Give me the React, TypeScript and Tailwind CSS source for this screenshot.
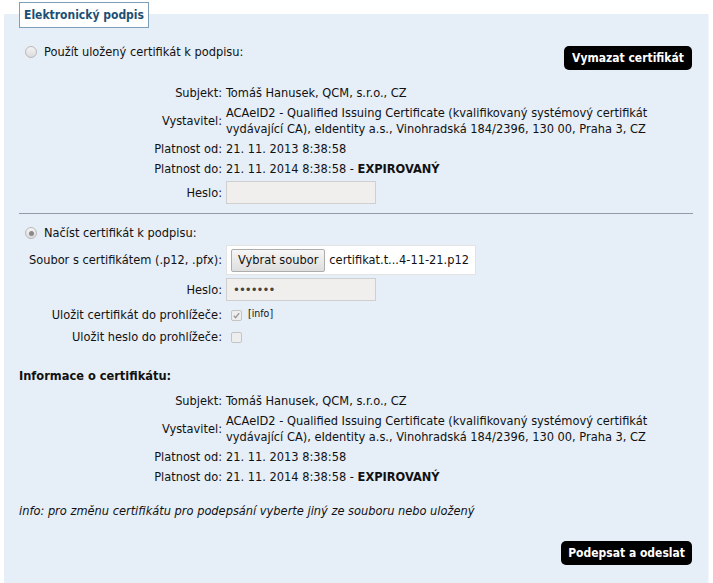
import React from 'react';

const FONT = "font-['DejaVu_Sans_Condensed','Liberation_Sans',sans-serif]";

function Row({ label, children, className = '' }: { label: string; children: React.ReactNode; className?: string }) {
  return (
    <div className={`flex items-center gap-1 ${className}`}>
      <div className="w-[203px] text-right whitespace-nowrap shrink-0">{label}</div>
      <div className="min-w-0">{children}</div>
    </div>
  );
}

function Radio({ checked = false }: { checked?: boolean }) {
  return (
    <span className="inline-flex w-[12px] h-[12px] rounded-full border border-[#b9b9b9] bg-gradient-to-b from-[#f4f4f4] to-[#dcdcdc] items-center justify-center shrink-0">
      {checked && <span className="w-[5px] h-[5px] rounded-full bg-[#8a8a8a]" />}
    </span>
  );
}

function Checkbox({ checked = false }: { checked?: boolean }) {
  return (
    <span className="inline-flex w-[11px] h-[11px] rounded-[2px] border border-[#c4c4c4] bg-[#eeeeee] items-center justify-center shrink-0">
      {checked && (
        <svg viewBox="0 0 10 10" className="w-[9px] h-[9px]">
          <path d="M2 5.2 L4 7.4 L8 2.4" fill="none" stroke="#9a9a9a" strokeWidth="1.6" />
        </svg>
      )}
    </span>
  );
}

function CertInfo() {
  return (
    <div className="flex flex-col gap-1">
      <Row label="Subjekt:">Tomáš Hanusek, QCM, s.r.o., CZ</Row>
      <Row label="Vystavitel:">
        <div>
          ACAeID2 - Qualified Issuing Certificate (kvalifikovaný systémový certifikát
          <br />
          vydávající CA), eIdentity a.s., Vinohradská 184/2396, 130 00, Praha 3, CZ
        </div>
      </Row>
      <Row label="Platnost od:">21. 11. 2013 8:38:58</Row>
      <Row label="Platnost do:">
        21. 11. 2014 8:38:58 - <b>EXPIROVANÝ</b>
      </Row>
    </div>
  );
}

export default function App() {
  return (
    <div className={`w-[713px] h-[583px] overflow-hidden bg-white relative ${FONT} text-[12.7px] leading-[16px] text-[#111]`}>
      <div className="mt-[14px] ml-[4px] w-[705px] h-[600px] bg-[#e6eef7] border-r border-[#f3f7fb] pl-[15px] pr-[16px]">
        {/* legend */}
        <div className="absolute left-[19px] top-[2px] h-[26px] px-[4px] border border-[#7d9fb8] bg-white flex items-center font-bold text-[12px] text-[#1d4f74]">
          Elektronický podpis
        </div>

        {/* saved certificate */}
        <div className="pt-[29px] flex justify-between items-start">
          <label className="flex items-center gap-[7px] pl-[6px] mt-[1px]">
            <Radio />
            <span>Použít uložený certifikát k podpisu:</span>
          </label>
          <button className="mt-[3px] h-[24px] px-[8px] rounded-[5px] bg-black text-white font-bold text-[12px]">
            Vymazat certifikát
          </button>
        </div>

        <div className="mt-[15px]">
          <CertInfo />
          <Row label="Heslo:" className="mt-1">
            <div className="w-[150px] h-[23px] border border-[#cfcfcf] bg-[#f0efed]" />
          </Row>
        </div>

        <div className="mt-[9px] h-px bg-[#8e9cab] mr-[-1px]" />

        {/* load certificate */}
        <label className="mt-[11px] flex items-center gap-[7px] pl-[6px]">
          <Radio checked />
          <span>Načíst certifikát k podpisu:</span>
        </label>

        <div className="mt-[4px] flex flex-col gap-[4px]">
          <Row label="Soubor s certifikátem (.p12, .pfx):">
            <div className="h-[30px] w-[250px] bg-white border border-[#e3e3e3] flex items-center pl-[4px] gap-[4px] whitespace-nowrap">
              <span className="h-[23px] px-[6px] border border-[#adadad] rounded-[2px] bg-gradient-to-b from-[#f6f6f6] to-[#dedede] flex items-center">
                Vybrat soubor
              </span>
              <span>certifikat.t...4-11-21.p12</span>
            </div>
          </Row>
          <Row label="Heslo:" className="-mt-px">
            <div className="w-[150px] h-[23px] border border-[#cfcfcf] bg-[#f0efed] flex items-center pl-[6px] text-[#444] tracking-[-1px] text-[13px]">
              •••••••
            </div>
          </Row>
          <Row label="Uložit certifikát do prohlížeče:" className="mt-[2px]">
            <div className="flex items-center pl-[5px] gap-[6px]">
              <Checkbox checked />
              <span className="text-[10.5px] leading-[10px] -mt-[4px]">[info]</span>
            </div>
          </Row>
          <Row label="Uložit heslo do prohlížeče:" className="mt-[2px]">
            <div className="flex items-center pl-[5px]">
              <Checkbox />
            </div>
          </Row>
        </div>

        <div className="mt-[23px] font-bold">Informace o certifikátu:</div>
        <div className="mt-[9px]">
          <CertInfo />
        </div>

        <div className="mt-[18px] italic">info: pro změnu certifikátu pro podepsání vyberte jiný ze souboru nebo uložený</div>

        <div className="mt-[22px] flex justify-end">
          <button className="h-[24px] px-[7px] rounded-[5px] bg-black text-white font-bold text-[12px]">Podepsat a odeslat</button>
        </div>
      </div>
    </div>
  );
}
